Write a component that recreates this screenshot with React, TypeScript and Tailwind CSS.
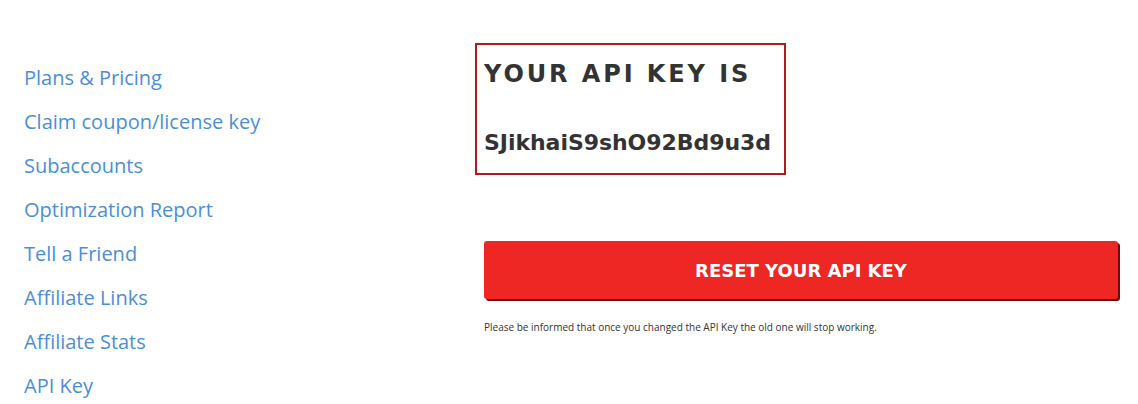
import * as React from 'react';

const links = [
  'Plans & Pricing',
  'Claim coupon/license key',
  'Subaccounts',
  'Optimization Report',
  'Tell a Friend',
  'Affiliate Links',
  'Affiliate Stats',
  'API Key',
];

const Sidebar = () => (
  <ul className="w-[484px] shrink-0 pl-6 pt-[63px] font-['Open_Sans',sans-serif]">
    {links.map((label) => (
      <li key={label} className="h-[44px] text-[20px] leading-[30px] text-[#4a8fd6]">
        <a href="#">{label}</a>
      </li>
    ))}
  </ul>
);

export default function App() {
  const apiKey = 'SJikhaiS9shO92Bd9u3d';

  return (
    <div className="flex h-[404px] w-[1138px] overflow-hidden bg-white">
      <Sidebar />
      <div className="flex-1 pt-[43px] pr-5">
        <div className="-ml-[9px] inline-block border-2 border-[#b3181b] pl-[7px] pr-[13px] pt-[12px] pb-[13px] font-['DejaVu_Sans',sans-serif] font-bold text-[#333333]">
          <h2 className="text-[24px] leading-[34px] tracking-[2.9px]">YOUR API KEY IS</h2>
          <p className="mt-[35px] text-[22px] leading-[34px] tracking-[-0.05px]">{apiKey}</p>
        </div>
        <button className="mt-[66px] h-[58px] w-[634px] rounded-[3px] bg-[#ee2724] font-['DejaVu_Sans',sans-serif] text-[18px] font-bold text-white shadow-[2px_2px_0_#730a0a]">
          RESET YOUR API KEY
        </button>
        <p className="mt-[21px] font-['Open_Sans',sans-serif] text-[10px] text-[#333333]">
          Please be informed that once you changed the API Key the old one will stop working.
        </p>
      </div>
    </div>
  );
}
